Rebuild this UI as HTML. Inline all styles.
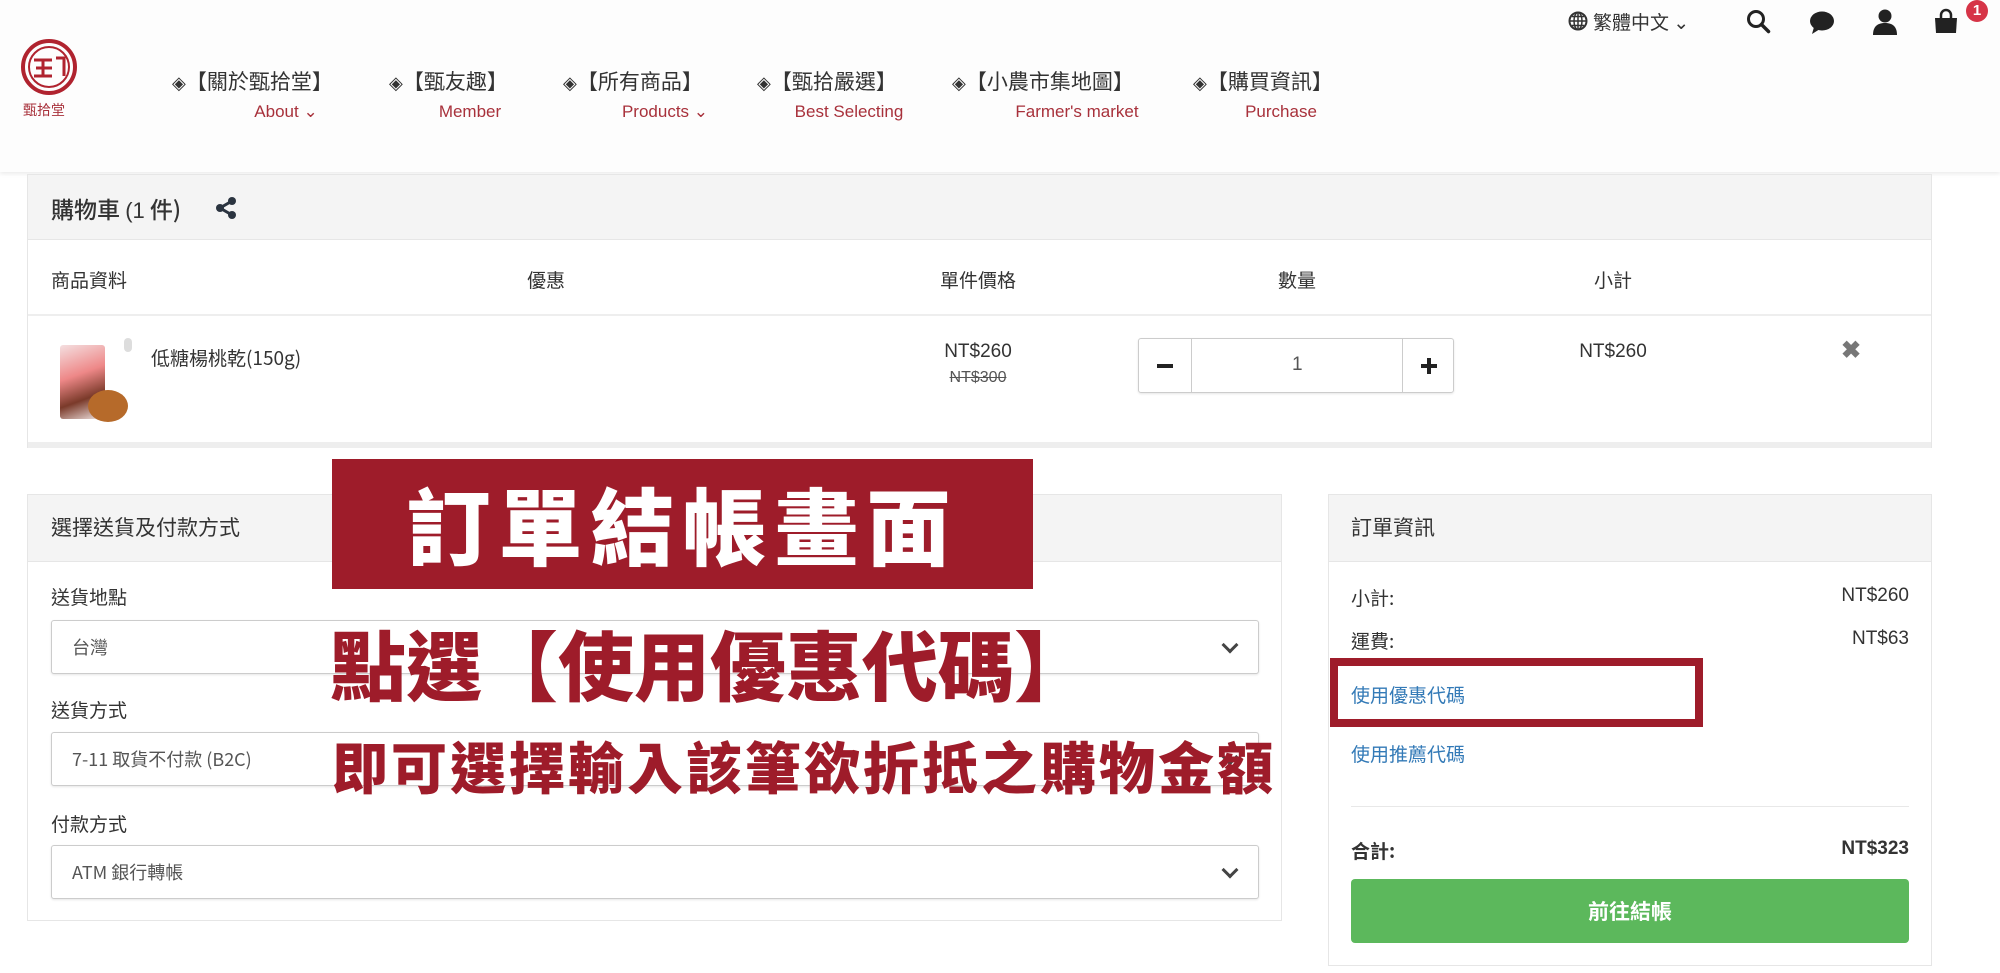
<!DOCTYPE html>
<html><head><meta charset="utf-8"><style>
*{margin:0;padding:0;box-sizing:border-box}
body{width:2000px;height:973px;position:relative;background:#fff;font-family:"Liberation Sans","Noto Sans CJK TC",sans-serif;color:#333;overflow:hidden}
.a{position:absolute;white-space:nowrap}
.hdr{left:0;top:0;width:2000px;height:172px;background:#fdfdfd;box-shadow:0 2px 4px rgba(0,0,0,.08)}
.nav{top:66px;font-size:21px;color:#333}
.en{top:102px;font-size:17px;color:#a8313b;transform:translateX(-50%)}
.dm{font-size:18px;color:#333}
.panel{border:1px solid #e6e6e6;background:#fff}
.ph{background:#f4f4f4;border-bottom:1px solid #e6e6e6}
.t19{font-size:19px}
.sel{border:1px solid #ccc;border-radius:3px;background:#fff;box-shadow:0 1px 2px rgba(0,0,0,.1);font-size:18px;color:#555;padding-left:20px;line-height:52px}
.chev{position:absolute;right:22px;top:18px;width:12px;height:12px;border-right:3px solid #444;border-bottom:3px solid #444;transform:rotate(45deg)}
.cjk{font-family:"Noto Sans CJK TC","Liberation Sans",sans-serif}
</style></head><body>
<div class="a hdr"></div>
<svg class="a" style="left:20px;top:38px" width="58" height="58" viewBox="0 0 58 58"><circle cx="29" cy="29" r="26" fill="none" stroke="#b0232f" stroke-width="4"/><circle cx="29" cy="29" r="20" fill="none" stroke="#b0232f" stroke-width="2"/><path d="M14 22h18M16 30h16M14 38h18M23 22v16M36 20h8v18" stroke="#b0232f" stroke-width="3" fill="none"/></svg>
<div class="a cjk" style="left:23px;top:100px;font-size:14px;color:#a8313b">甄拾堂</div>
<div class="a nav cjk" style="left:172px"><span class="dm">◈</span>【關於甄拾堂】</div>
<div class="a nav cjk" style="left:389px"><span class="dm">◈</span>【甄友趣】</div>
<div class="a nav cjk" style="left:563px"><span class="dm">◈</span>【所有商品】</div>
<div class="a nav cjk" style="left:757px"><span class="dm">◈</span>【甄拾嚴選】</div>
<div class="a nav cjk" style="left:952px"><span class="dm">◈</span>【小農市集地圖】</div>
<div class="a nav cjk" style="left:1193px"><span class="dm">◈</span>【購買資訊】</div>
<div class="a en" style="left:286px">About ⌄</div>
<div class="a en" style="left:470px">Member</div>
<div class="a en" style="left:665px">Products ⌄</div>
<div class="a en" style="left:849px">Best Selecting</div>
<div class="a en" style="left:1077px">Farmer's market</div>
<div class="a en" style="left:1281px">Purchase</div>
<svg class="a" style="left:1568px;top:11px" width="20" height="20" viewBox="0 0 20 20"><circle cx="10" cy="10" r="8.5" fill="none" stroke="#333" stroke-width="2"/><path d="M2 10h16M10 2v16M4 5.5h12M4 14.5h12" stroke="#333" stroke-width="1.5"/><ellipse cx="10" cy="10" rx="4" ry="8.5" fill="none" stroke="#333" stroke-width="1.5"/></svg>
<div class="a cjk" style="left:1593px;top:8px;font-size:19px;color:#333">繁體中文 ⌄</div>
<svg class="a" style="left:1746px;top:9px" width="26" height="26" viewBox="0 0 26 26"><circle cx="10" cy="10" r="7.5" fill="none" stroke="#222" stroke-width="3"/><path d="M15.5 15.5l7 7" stroke="#222" stroke-width="3.5" stroke-linecap="round"/></svg>
<svg class="a" style="left:1808px;top:10px" width="28" height="26" viewBox="0 0 28 26"><ellipse cx="14" cy="11" rx="12" ry="9.5" fill="#222"/><path d="M6 17l-2 7 8-5z" fill="#222"/></svg>
<svg class="a" style="left:1872px;top:8px" width="26" height="28" viewBox="0 0 26 28"><circle cx="13" cy="8" r="6.5" fill="#222"/><path d="M1 27c0-9 5-12 12-12s12 3 12 12z" fill="#222"/></svg>
<svg class="a" style="left:1933px;top:8px" width="26" height="26" viewBox="0 0 26 26"><path d="M8 10V7a5 5 0 0 1 10 0v3" fill="none" stroke="#222" stroke-width="2.5"/><path d="M2 10h22l-1 15H3z" fill="#222"/></svg>
<div class="a" style="left:1966px;top:0;width:22px;height:22px;border-radius:11px;background:#d63447;color:#fff;font-size:15px;font-weight:bold;text-align:center;line-height:22px">1</div>

<div class="a panel" style="left:27px;top:174px;width:1905px;height:274px"></div>
<div class="a ph" style="left:28px;top:175px;width:1903px;height:65px"></div>
<div class="a cjk" style="left:51px;top:191px;font-size:23px;color:#333;font-weight:500">購物車 <span style="font-family:'Liberation Sans';font-size:22px">(1</span> 件)</div>
<svg class="a" style="left:214px;top:196px" width="24" height="24" viewBox="0 0 24 24"><circle cx="18" cy="5" r="4" fill="#2b3440"/><circle cx="6" cy="12" r="4" fill="#2b3440"/><circle cx="18" cy="19" r="4" fill="#2b3440"/><path d="M18 5L6 12l12 7" stroke="#2b3440" stroke-width="3" fill="none"/></svg>
<div class="a" style="left:28px;top:314px;width:1903px;height:2px;background:#eee"></div>
<div class="a t19 cjk" style="left:51px;top:266px">商品資料</div>
<div class="a t19 cjk" style="left:527px;top:266px">優惠</div>
<div class="a t19 cjk" style="left:940px;top:266px">單件價格</div>
<div class="a t19 cjk" style="left:1278px;top:266px">數量</div>
<div class="a t19 cjk" style="left:1594px;top:266px">小計</div>
<div class="a" style="left:60px;top:345px;width:45px;height:74px;background:linear-gradient(160deg,#f4dfe0,#e88 40%,#7a3a2a 70%,#f3e8e6);border-radius:3px"></div>
<div class="a" style="left:88px;top:390px;width:40px;height:32px;border-radius:50%;background:#b66a2a"></div>
<div class="a" style="left:124px;top:338px;width:8px;height:14px;border-radius:4px;background:#ddd"></div>
<div class="a cjk" style="left:151px;top:344px;font-size:19px">低糖楊桃乾(150g)</div>
<div class="a t19" style="left:978px;top:341px;transform:translateX(-50%)">NT$260</div>
<div class="a" style="left:978px;top:369px;transform:translateX(-50%);font-size:16px;color:#555;text-decoration:line-through">NT$300</div>
<div class="a" style="left:1138px;top:338px;width:316px;height:55px;border:1px solid #ccc;border-radius:3px;box-shadow:0 1px 2px rgba(0,0,0,.1)"></div>
<div class="a" style="left:1191px;top:339px;width:1px;height:53px;background:#ccc"></div>
<div class="a" style="left:1402px;top:339px;width:1px;height:53px;background:#ccc"></div>
<div class="a" style="left:1157px;top:364px;width:16px;height:4px;background:#222"></div>
<div class="a" style="left:1421px;top:364px;width:16px;height:4px;background:#222"></div>
<div class="a" style="left:1427px;top:358px;width:4px;height:16px;background:#222"></div>
<div class="a t19" style="left:1292px;top:354px;color:#555">1</div>
<div class="a t19" style="left:1613px;top:341px;transform:translateX(-50%)">NT$260</div>
<div class="a" style="left:1841px;top:336px;font-size:24px;color:#777;font-weight:bold">✖</div>
<div class="a" style="left:28px;top:442px;width:1903px;height:6px;background:#eee"></div>

<div class="a panel" style="left:27px;top:494px;width:1255px;height:427px"></div>
<div class="a ph" style="left:28px;top:495px;width:1253px;height:67px"></div>
<div class="a cjk" style="left:51px;top:512px;font-size:21px">選擇送貨及付款方式</div>
<div class="a t19 cjk" style="left:51px;top:583px">送貨地點</div>
<div class="a sel cjk" style="left:51px;top:620px;width:1208px;height:54px">台灣<i class="chev"></i></div>
<div class="a t19 cjk" style="left:51px;top:696px">送貨方式</div>
<div class="a sel cjk" style="left:51px;top:732px;width:1208px;height:54px">7-11 取貨不付款 (B2C)<i class="chev"></i></div>
<div class="a t19 cjk" style="left:51px;top:810px">付款方式</div>
<div class="a sel cjk" style="left:51px;top:845px;width:1208px;height:54px">ATM 銀行轉帳<i class="chev"></i></div>

<div class="a panel" style="left:1328px;top:494px;width:604px;height:472px"></div>
<div class="a ph" style="left:1329px;top:495px;width:602px;height:67px"></div>
<div class="a cjk" style="left:1351px;top:512px;font-size:21px">訂單資訊</div>
<div class="a t19 cjk" style="left:1351px;top:584px">小計:</div>
<div class="a t19" style="right:91px;top:585px">NT$260</div>
<div class="a t19 cjk" style="left:1351px;top:627px">運費:</div>
<div class="a t19" style="right:91px;top:628px">NT$63</div>
<div class="a" style="left:1330px;top:658px;width:373px;height:69px;border:8px solid #9e1c2a"></div>
<div class="a t19 cjk" style="left:1351px;top:681px;color:#337ab7">使用優惠代碼</div>
<div class="a t19 cjk" style="left:1351px;top:740px;color:#337ab7">使用推薦代碼</div>
<div class="a" style="left:1351px;top:806px;width:558px;height:1px;background:#e8e8e8"></div>
<div class="a t19 cjk" style="left:1351px;top:837px;font-weight:bold">合計:</div>
<div class="a t19" style="right:91px;top:838px;font-weight:bold">NT$323</div>
<div class="a cjk" style="left:1351px;top:879px;width:558px;height:64px;background:#5cb85c;border-radius:4px;color:#fff;font-size:21px;font-weight:bold;text-align:center;line-height:64px">前往結帳</div>

<div class="a cjk" style="left:332px;top:459px;width:701px;height:130px;background:#9e1c2a;color:#fff;font-size:84px;font-weight:900;text-align:center;line-height:130px;letter-spacing:8px">訂單結帳畫面</div>
<div class="a cjk" style="left:330px;top:612px;font-size:76px;font-weight:900;color:#9e1c2a;line-height:100px">點選【使用優惠代碼】</div>
<div class="a cjk" style="left:332px;top:730px;font-size:56px;font-weight:900;color:#9e1c2a;letter-spacing:3px;line-height:72px">即可選擇輸入該筆欲折抵之購物金額</div>
</body></html>
